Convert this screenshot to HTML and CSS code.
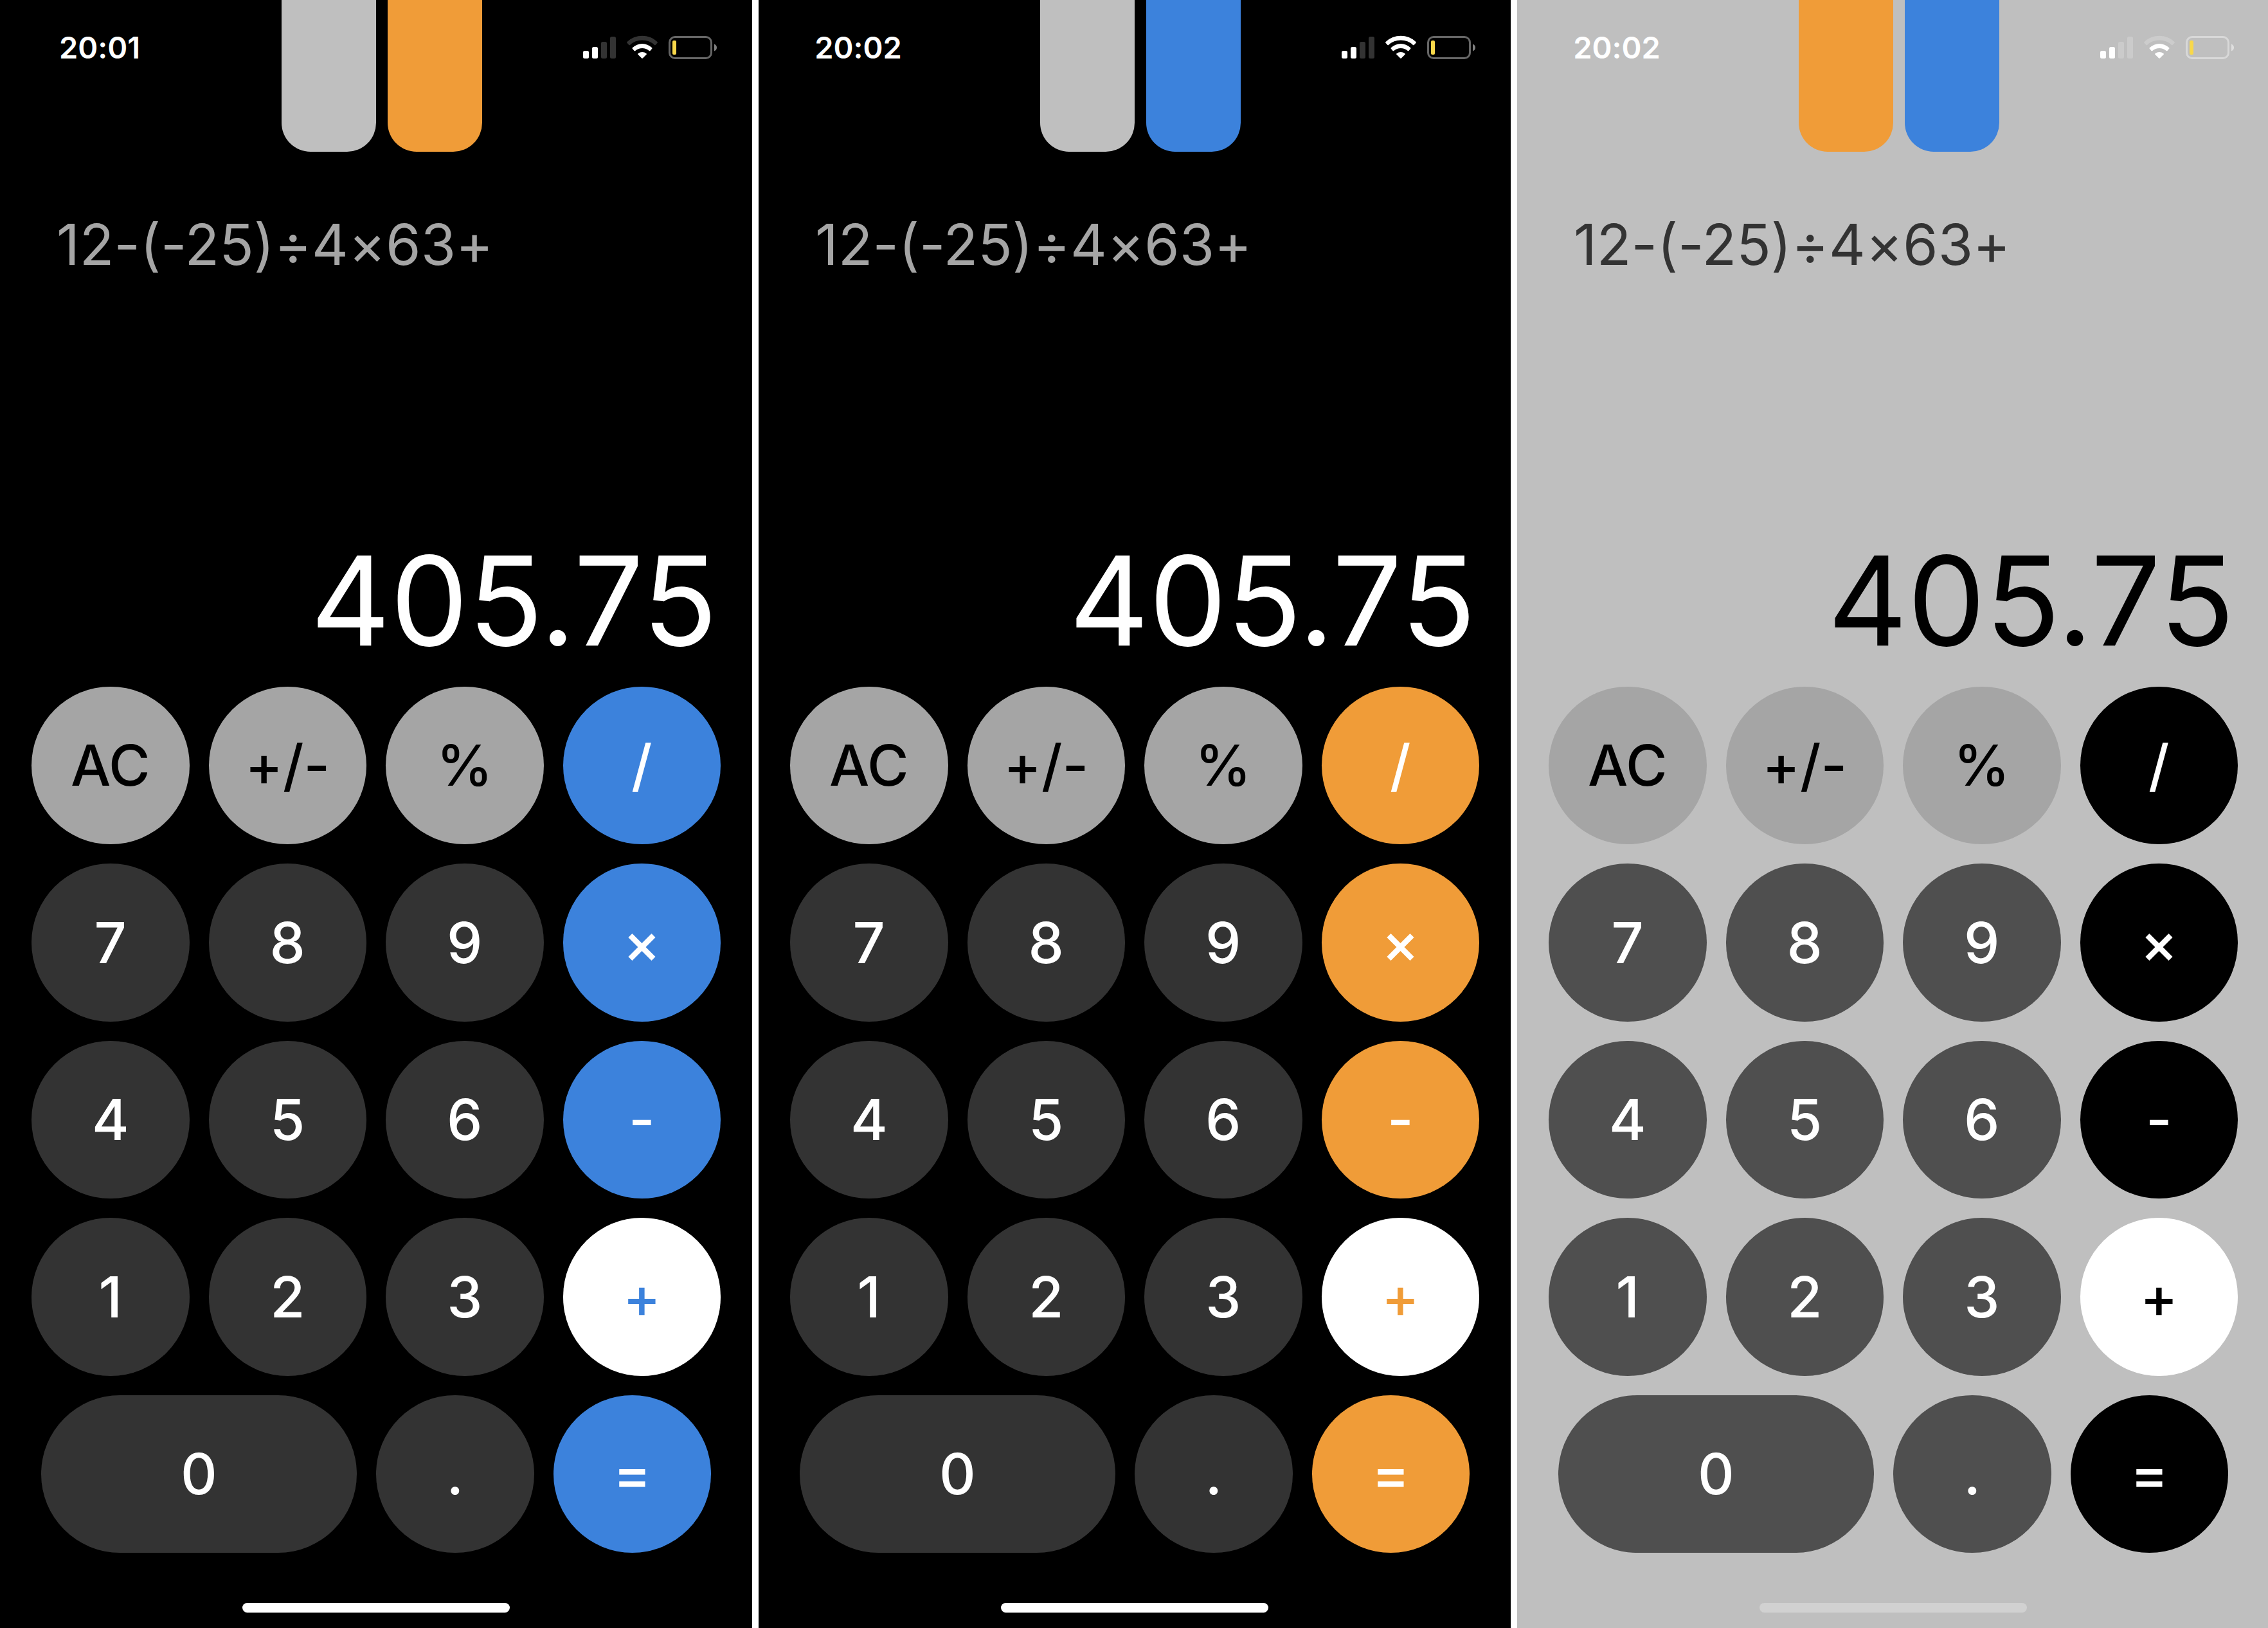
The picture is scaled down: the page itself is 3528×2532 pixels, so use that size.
FILE: index.html
```html
<!DOCTYPE html>
<html lang="en">
<head>
<meta charset="utf-8">
<meta name="viewport" content="width=device-width, initial-scale=1">
<title>Calculator themes</title>
<link rel="stylesheet" href="styles.css">
</head>
<body>
<svg class="sprite" aria-hidden="true">
  <symbol id="signal" viewBox="0 0 51 38">
    <rect x="0" y="24" width="9" height="12" rx="2.5"/>
    <rect x="14" y="18" width="9" height="18" rx="2.5"/>
    <rect x="28" y="10" width="9" height="26" rx="2.5" opacity=".2"/>
    <rect x="42" y="2" width="9" height="34" rx="2.5" opacity=".2"/>
  </symbol>
  <symbol id="wifi-inner" viewBox="0 0 48 38">
    <path d="M8.8 19.2A22 22 0 0 1 39.2 19.2Q40 20 39.2 20.8L36.4 23.9Q35.6 24.6 34.8 23.9A17 17 0 0 0 13.2 23.9Q12.4 24.6 11.6 23.9L8.8 20.8Q8 20 8.8 19.2Z"/>
    <path d="M17.5 28.2A10.5 10.5 0 0 1 30.5 28.2Q31.4 29 30.6 29.8L24.8 35.5Q24 36.2 23.2 35.5L17.4 29.8Q16.6 29 17.5 28.2Z"/>
  </symbol>
  <symbol id="wifi-outer" viewBox="0 0 48 38">
    <path d="M.6 10A34 34 0 0 1 47.4 10Q48.300 10.900 47.500 11.700L44.600 14.900Q43.800 15.700 43 14.900A27.800 27.800 0 0 0 5 14.900Q4.200 15.700 3.400 14.900L.5 11.700Q-.3 10.900 .6 10Z"/>
  </symbol>
  <symbol id="battery" viewBox="0 0 75 38">
    <rect x="1.500" y="2.500" width="65" height="33" rx="8.500" fill="none" stroke="#fff" stroke-width="3" opacity=".4"/>
    <rect x="6" y="8" width="6" height="22" rx="2" fill="#f8d84a"/>
    <path d="M71 13.500Q75 15 75 19Q75 23 71 24.500Z" opacity=".5"/>
  </symbol>
</svg>
<main class="gallery">

  <section class="phone theme-blue" aria-label="Blue theme">
    <header class="top">
      <time class="clock">20:01</time>
      <div class="themes">
        <button class="swatch silver" type="button" aria-label="Silver theme"></button>
        <button class="swatch orange" type="button" aria-label="Orange theme"></button>
      </div>
      <div class="status">
        <svg class="signal"><use href="#signal"/></svg>
        <svg class="wifi"><use class="weak" href="#wifi-outer"/><use href="#wifi-inner"/></svg>
        <svg class="battery"><use href="#battery"/></svg>
      </div>
    </header>
    <output class="expression">12-(-25)÷4×63+</output>
    <output class="result">405.75</output>
    <div class="keypad">
      <div class="row"><button type="button" class="key fn">AC</button><button type="button" class="key fn">+/-</button><button type="button" class="key fn">%</button><button type="button" class="key op">/</button></div>
      <div class="row"><button type="button" class="key">7</button><button type="button" class="key">8</button><button type="button" class="key">9</button><button type="button" class="key op">×</button></div>
      <div class="row"><button type="button" class="key">4</button><button type="button" class="key">5</button><button type="button" class="key">6</button><button type="button" class="key op">-</button></div>
      <div class="row"><button type="button" class="key">1</button><button type="button" class="key">2</button><button type="button" class="key">3</button><button type="button" class="key op active" aria-pressed="true">+</button></div>
      <div class="row last"><button type="button" class="key wide">0</button><button type="button" class="key">.</button><button type="button" class="key op">=</button></div>
    </div>
    <div class="home"></div>
  </section>

  <section class="phone theme-orange" aria-label="Orange theme">
    <header class="top">
      <time class="clock">20:02</time>
      <div class="themes">
        <button class="swatch silver" type="button" aria-label="Silver theme"></button>
        <button class="swatch blue" type="button" aria-label="Blue theme"></button>
      </div>
      <div class="status">
        <svg class="signal"><use href="#signal"/></svg>
        <svg class="wifi"><use href="#wifi-outer"/><use href="#wifi-inner"/></svg>
        <svg class="battery"><use href="#battery"/></svg>
      </div>
    </header>
    <output class="expression">12-(-25)÷4×63+</output>
    <output class="result">405.75</output>
    <div class="keypad">
      <div class="row"><button type="button" class="key fn">AC</button><button type="button" class="key fn">+/-</button><button type="button" class="key fn">%</button><button type="button" class="key op">/</button></div>
      <div class="row"><button type="button" class="key">7</button><button type="button" class="key">8</button><button type="button" class="key">9</button><button type="button" class="key op">×</button></div>
      <div class="row"><button type="button" class="key">4</button><button type="button" class="key">5</button><button type="button" class="key">6</button><button type="button" class="key op">-</button></div>
      <div class="row"><button type="button" class="key">1</button><button type="button" class="key">2</button><button type="button" class="key">3</button><button type="button" class="key op active" aria-pressed="true">+</button></div>
      <div class="row last"><button type="button" class="key wide">0</button><button type="button" class="key">.</button><button type="button" class="key op">=</button></div>
    </div>
    <div class="home"></div>
  </section>

  <section class="phone theme-silver" aria-label="Silver theme">
    <header class="top">
      <time class="clock">20:02</time>
      <div class="themes">
        <button class="swatch orange" type="button" aria-label="Orange theme"></button>
        <button class="swatch blue" type="button" aria-label="Blue theme"></button>
      </div>
      <div class="status">
        <svg class="signal"><use href="#signal"/></svg>
        <svg class="wifi"><use class="weak" href="#wifi-outer"/><use href="#wifi-inner"/></svg>
        <svg class="battery"><use href="#battery"/></svg>
      </div>
    </header>
    <output class="expression">12-(-25)÷4×63+</output>
    <output class="result">405.75</output>
    <div class="keypad">
      <div class="row"><button type="button" class="key fn">AC</button><button type="button" class="key fn">+/-</button><button type="button" class="key fn">%</button><button type="button" class="key op">/</button></div>
      <div class="row"><button type="button" class="key">7</button><button type="button" class="key">8</button><button type="button" class="key">9</button><button type="button" class="key op">×</button></div>
      <div class="row"><button type="button" class="key">4</button><button type="button" class="key">5</button><button type="button" class="key">6</button><button type="button" class="key op">-</button></div>
      <div class="row"><button type="button" class="key">1</button><button type="button" class="key">2</button><button type="button" class="key">3</button><button type="button" class="key op active" aria-pressed="true">+</button></div>
      <div class="row last"><button type="button" class="key wide">0</button><button type="button" class="key">.</button><button type="button" class="key op">=</button></div>
    </div>
    <div class="home"></div>
  </section>

</main>
</body>
</html>
```

FILE: styles.css
```css
:root {
  --blue: #3c82dc;
  --orange: #f09c38;
  --silver: #bfbfbf;
}

* {
  box-sizing: border-box;
}

body {
  margin: 0;
  overflow: hidden;
  background: #fff;
  font-family: Inter, "Liberation Sans", sans-serif;
  font-feature-settings: "calt" 0;
}

.sprite {
  display: none;
}

.gallery {
  display: grid;
  grid-template-columns: repeat(3, 1fr);
  gap: 10px;
  min-height: 100vh;
  margin-right: -2px;
}

.phone {
  --screen: #000;
  --key: #333;
  --expression: #a5a5a5;
  --result: #fff;
  --home: #fff;
  display: flex;
  flex-direction: column;
  padding-bottom: 24px;
  background: var(--screen);
}

.theme-blue {
  --accent: var(--blue);
}

.theme-orange {
  --accent: var(--orange);
}

.theme-silver {
  --screen: var(--silver);
  --key: #4f4f4f;
  --expression: #333;
  --result: #000;
  --home: #d1d1d1;
  --accent: #000;
}

.top {
  display: grid;
  grid-template-columns: 1fr auto 1fr;
  align-items: start;
}

.clock {
  width: 310px;
  color: #fff;
  font-size: 47px;
  font-weight: 600;
  line-height: 148px;
  text-align: center;
}

.themes {
  display: flex;
  gap: 18px;
  padding-left: 18px;
}

.swatch {
  width: 147px;
  height: 236px;
  padding: 0;
  border: 0;
  border-radius: 0 0 45px 45px;
}

.silver {
  background: var(--silver);
}

.orange {
  background: var(--orange);
}

.blue {
  background: var(--blue);
}

.status {
  display: flex;
  align-items: center;
  justify-content: flex-end;
  gap: 17px;
  height: 148px;
  padding-right: 55px;
  fill: #fff;
}

.status svg {
  height: 38px;
}

.signal {
  width: 51px;
}

.wifi {
  width: 48px;
}

.battery {
  width: 75px;
}

.weak {
  opacity: .2;
}

.expression {
  padding: 91px 88px 0;
  color: var(--expression);
  font-size: 88px;
  line-height: 106px;
}

.result {
  margin-top: auto;
  padding: 0 54px 18px;
  color: var(--result);
  font-size: 192px;
  line-height: 232px;
  text-align: right;
}

.keypad {
  display: grid;
  gap: 30px;
}

.row {
  display: grid;
  grid-template-columns: repeat(4, 1fr);
  gap: 30px;
  padding: 0 49px;
}

.last {
  grid-template-columns: 2fr 1fr 1fr;
  padding: 0 64px;
}

.key {
  aspect-ratio: 1;
  min-width: 0;
  padding: 0;
  border: 0;
  border-radius: 999px;
  background: var(--key);
  color: #fff;
  font: inherit;
  font-size: 88px;
  font-weight: 500;
}

.wide {
  aspect-ratio: 2;
}

.fn {
  background: #a5a5a5;
  color: #000;
}

.op {
  background: var(--accent);
}

.active {
  background: #fff;
  color: var(--accent);
}

.home {
  width: 416px;
  height: 15px;
  margin: 78px auto 0;
  border-radius: 8px;
  background: var(--home);
}
```
